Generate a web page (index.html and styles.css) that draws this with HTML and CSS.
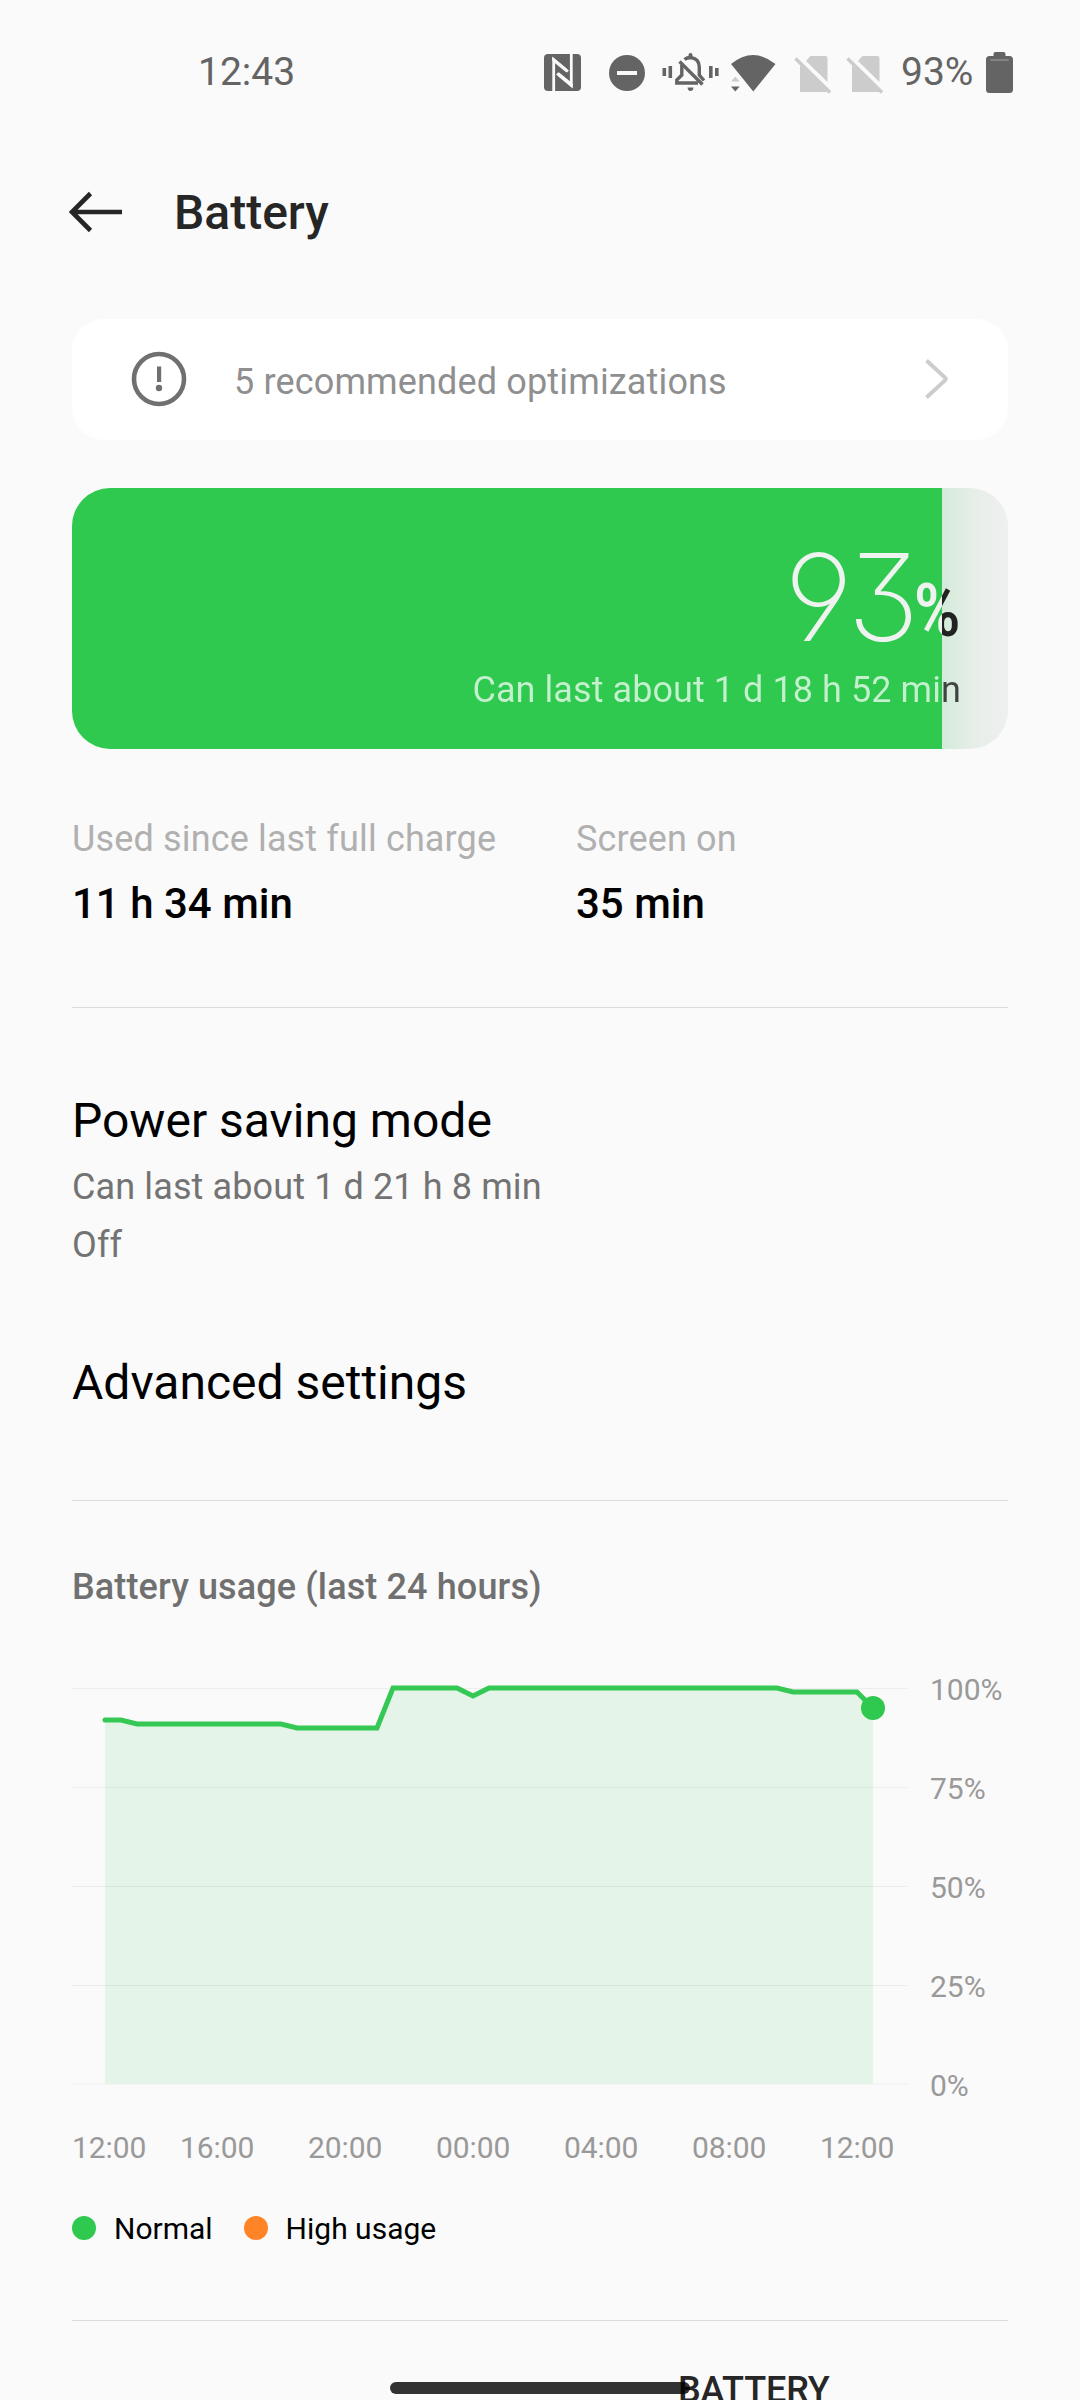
FILE: index.html
```html
<!DOCTYPE html>
<html lang="en">
  <head>
    <meta charset="UTF-8" />
    <meta name="viewport" content="width=device-width, initial-scale=1.0" />
    <title>Battery</title>
    <link rel="stylesheet" href="styles.css">
  </head>
  <body>
    <!-- Status bar -->
    <div class="status-bar">
      <span class="clock">12:43</span>
      <div class="status-icons">
        <svg class="icon-nfc" width="37" height="37" viewBox="0 0 37 37">
          <rect width="37" height="37" rx="4" fill="#646464" />
          <path d="M9.7 37V5.5L24 17.5M27.3 0V31.5L13 19.5" fill="none" stroke="#fafafa" stroke-width="2.8" />
          <path d="M8.3 3.2L22.5 14.5V18.5L8.3 7ZM28.7 33.8L14.5 22.5V18L28.7 29.5Z" fill="#fafafa" />
        </svg>
        <svg class="icon-dnd" width="36" height="36" viewBox="0 0 36 36">
          <circle cx="18" cy="18" r="18" fill="#646464" />
          <rect x="8" y="16" width="20" height="4" fill="#fafafa" />
        </svg>
        <svg class="icon-bell" width="57" height="38" viewBox="0 0 57 38">
          <g fill="#646464">
            <rect x="0.5" y="15" width="3.6" height="8" />
            <rect x="6.5" y="13" width="3.6" height="12" />
            <rect x="47" y="13" width="3.6" height="12" />
            <rect x="53" y="15" width="3.6" height="8" />
            <path d="M25.5 34.5H31.5Q31 38 28.5 38Q26 38 25.5 34.5Z" />
            <path d="M26.5 5V2Q26.5 0 28.5 0Q30.5 0 30.5 2V5Z" />
          </g>
          <path d="M22.5 6.5Q25 4.5 28.5 4.5Q37.2 5.5 37.3 14V22L42 27.5" fill="none" stroke="#646464" stroke-width="3.4" />
          <path d="M19.8 12V22L14.8 27V30H36" fill="none" stroke="#646464" stroke-width="3.4" />
          <path d="M17.5 8.5L40.5 31.5" stroke="#646464" stroke-width="3.4" />
        </svg>
        <svg class="icon-wifi" width="46" height="38" viewBox="0 0 46 38">
          <path d="M1 10Q23 -8 45.5 10L23.3 37.5Z" fill="#646464" />
          <path d="M1 27.5L5.3 22.5L9.6 27.5Z" fill="#ccc" />
          <path d="M1 32.5L5.3 37.5L9.6 32.5Z" fill="#646464" />
        </svg>
        <svg class="icon-sim" width="38" height="38" viewBox="0 0 38 38">
          <path d="M16.5 0H31.5Q33.5 0 33.5 2V26L12 5ZM6 9L33.5 36H6Z" fill="#ccc" />
          <path d="M1.5 2.5L36 36.5" stroke="#ccc" stroke-width="3.5" />
        </svg>
        <svg class="icon-sim" width="38" height="38" viewBox="0 0 38 38">
          <path d="M16.5 0H31.5Q33.5 0 33.5 2V26L12 5ZM6 9L33.5 36H6Z" fill="#ccc" />
          <path d="M1.5 2.5L36 36.5" stroke="#ccc" stroke-width="3.5" />
        </svg>
        <span class="level">93%</span>
        <svg class="icon-battery" width="27" height="41" viewBox="0 0 27 41">
          <path d="M7.5 4V2Q7.5 0 9.5 0H17.5Q19.5 0 19.5 2V4H23.5Q27 4 27 7.5V37.5Q27 41 23.5 41H3.5Q0 41 0 37.5V7.5Q0 4 3.5 4Z" fill="#646464" />
          <rect x="4" y="7" width="19" height="2" rx="1" fill="#858585" />
        </svg>
      </div>
    </div>

    <header class="header">
      <svg width="54" height="42" viewBox="0 0 54 42">
        <path d="M2 21H53M21.5 2.5L3 21L21.5 39.5" fill="none" stroke="#262626" stroke-width="4.6" />
      </svg>
      <h1>Battery</h1>
    </header>

    <main>
      <!-- Recommendations -->
      <div class="tip">
        <svg class="tip-icon" width="56" height="56" viewBox="0 0 56 56">
          <circle cx="28" cy="28" r="25" fill="none" stroke="#707070" stroke-width="4.6" />
          <rect x="26" y="15.5" width="4.2" height="15.5" fill="#707070" />
          <circle cx="28" cy="37" r="3.2" fill="#707070" />
        </svg>
        <span>5 recommended optimizations</span>
        <svg class="chevron" width="26" height="42" viewBox="0 0 26 42">
          <path d="M2.5 2.5L21 19.6Q22.5 21 21 22.4L2.5 39.5" fill="none" stroke="#ccc" stroke-width="4" />
        </svg>
      </div>

      <!-- Charge level -->
      <div class="charge">
        <div class="charge-value"><span class="digits">93</span><span class="percent">%</span></div>
        <div class="charge-note">Can last about 1 d 18 h 52 min</div>
      </div>

      <div class="stats">
        <div class="stat">
          <div class="stat-label">Used since last full charge</div>
          <div class="stat-value">11 h 34 min</div>
        </div>
        <div class="stat">
          <div class="stat-label">Screen on</div>
          <div class="stat-value">35 min</div>
        </div>
      </div>

      <!-- Settings -->
      <div class="settings">
        <div class="setting">
          <h2>Power saving mode</h2>
          <p>Can last about 1 d 21 h 8 min</p>
          <p>Off</p>
        </div>
        <div class="setting">
          <h2>Advanced settings</h2>
        </div>
      </div>

      <!-- Battery usage chart -->
      <section class="usage">
        <h3>Battery usage (last 24 hours)</h3>
        <div class="chart">
          <svg width="836" height="495" viewBox="0 0 836 495">
            <path d="M33 80H49L65 84H209L225 88H305L321 48H385L401 56L417 48H705L721 52H785L801 68V443.5H33Z" fill="#e4f4e8" />
            <path d="M0 48.5H835M0 147.5H835M0 246.5H835M0 345.5H835M0 444H835" stroke="#000" stroke-opacity="0.05" />
            <polyline points="33,80 49,80 65,84 209,84 225,88 305,88 321,48 385,48 401,56 417,48 705,48 721,52 785,52 801,68" fill="none" stroke="#35c854" stroke-width="5" stroke-linecap="round" />
            <circle cx="801" cy="68" r="12" fill="#2fc94f" />
          </svg>
          <div class="y-axis">
            <span>100%</span>
            <span>75%</span>
            <span>50%</span>
            <span>25%</span>
            <span>0%</span>
          </div>
        </div>
        <div class="x-axis">
          <span>12:00</span>
          <span>16:00</span>
          <span>20:00</span>
          <span>00:00</span>
          <span>04:00</span>
          <span>08:00</span>
          <span>12:00</span>
        </div>
        <div class="legend">
          <span class="dot normal"></span><span>Normal</span>
          <span class="dot high"></span><span>High usage</span>
        </div>
      </section>

      <div class="next-section">BATTERY</div>
    </main>

    <div class="home-bar"></div>
  </body>
</html>
```
FILE: styles.css
```css
* {
  box-sizing: border-box;
}

body {
  margin: 0;
  height: 2400px;
  position: relative;
  overflow: hidden;
  background-color: #fafafa;
  font-family: Roboto, sans-serif;
  color: #000;
}

h1,
h2,
h3,
p {
  margin: 0;
}

svg {
  display: block;
  flex: none;
}

.status-bar {
  display: flex;
  justify-content: space-between;
  height: 144px;
  padding: 0 67px 0 198px;
  color: #646464;
  font-size: 39px;
  line-height: 144px;
}

.status-icons {
  display: flex;
  align-items: center;
}

.icon-nfc {
  margin-right: 28px;
}

.icon-dnd {
  margin-top: 2px;
  margin-right: 17px;
}

.icon-bell {
  margin-right: 11px;
}

.icon-wifi {
  margin-top: 1px;
  margin-right: 18px;
}

.icon-sim {
  margin-top: 6px;
  margin-right: 14px;
}

.level {
  width: 72px;
  margin-left: 3px;
  margin-right: 13px;
}

.icon-battery {
  margin-top: 1px;
}

.header {
  display: flex;
  align-items: center;
  height: 136px;
  padding-left: 69px;
  gap: 51px;
}

.header h1 {
  padding-top: 2px;
  color: #262626;
  font-size: 48px;
  font-weight: 500;
  line-height: 56px;
}

main {
  padding: 39px 72px 0;
}

.tip {
  display: flex;
  align-items: center;
  height: 121px;
  padding: 0 58px 0 59px;
  border-radius: 32px;
  background-color: #fff;
}

.tip-icon,
.chevron {
  margin-bottom: 1px;
}

.tip span {
  margin-left: 47px;
  padding-top: 4px;
  color: #8f8f8f;
  font-size: 36px;
  letter-spacing: 0.15px;
}

.chevron {
  margin-left: auto;
}

.charge {
  height: 261px;
  margin-top: 48px;
  padding-top: 40px;
  border-radius: 38px;
  background: linear-gradient(to right, #2fc94f 870px, #d3ebd9 870px, #e6eee8 900px, #efefef 936px);
}

/* The text switches colour where the green fill ends */
.charge-value,
.charge-note {
  padding-right: 47px;
  text-align: right;
  color: transparent;
  background: linear-gradient(to right, #c5f0ce 870px, #3e4440 870px);
  -webkit-background-clip: text;
  background-clip: text;
}

.charge-value {
  height: 138px;
  line-height: 138px;
  background-image: linear-gradient(to right, #eff3f0 870px, #222 870px);
}

.digits {
  font-family: Inter, sans-serif;
  font-size: 121px;
  font-weight: 250;
  font-feature-settings: "ss01", "cv04", "cv09";
  letter-spacing: -6px;
}

.percent {
  font-size: 75px;
  font-weight: 500;
  font-stretch: 75%;
  line-height: 1;
  vertical-align: 5px;
}

.charge-note {
  font-size: 36px;
  letter-spacing: 0.07px;
  line-height: 48px;
}

.stats {
  display: flex;
  height: 259px;
  padding-top: 69px;
  border-bottom: 1px solid #dcdcdc;
}

.stat {
  flex: none;
  width: 504px;
}

.stat + .stat {
  width: 432px;
}

.stat-label {
  color: #b0b0b0;
  font-size: 36px;
  letter-spacing: 0.15px;
  line-height: 42px;
}

.stat-value {
  margin-top: 19px;
  font-size: 42px;
  font-weight: 500;
  line-height: 50px;
}

.settings {
  height: 493px;
  padding-top: 85px;
  border-bottom: 1px solid #dcdcdc;
}

.setting h2 {
  font-size: 48px;
  font-weight: 400;
  line-height: 56px;
  margin-bottom: 9px;
}

.setting p {
  color: #737373;
  font-size: 36px;
  letter-spacing: 0.12px;
  line-height: 58px;
}

.setting + .setting {
  margin-top: 81px;
}

.usage {
  height: 820px;
  padding-top: 65px;
  border-bottom: 1px solid #dcdcdc;
}

.usage h3 {
  color: #707070;
  font-size: 36px;
  font-weight: 500;
  letter-spacing: 0.12px;
  line-height: 42px;
}

.chart {
  display: flex;
  margin-top: 32px;
  gap: 22px;
}

.y-axis {
  display: flex;
  flex-direction: column;
  color: #999;
  font-size: 30px;
  line-height: 99px;
}

.x-axis {
  display: flex;
  color: #999;
  font-size: 30px;
  letter-spacing: -0.1px;
  line-height: 26px;
}

.x-axis span {
  width: 128px;
}

.x-axis span:first-child {
  width: 108px;
}

.legend {
  display: flex;
  align-items: center;
  height: 36px;
  margin-top: 49px;
  font-size: 30px;
}

.dot {
  width: 24px;
  height: 24px;
  margin-right: 18px;
  border-radius: 50%;
}

.normal {
  background-color: #2fc94f;
}

.high {
  margin-left: 31px;
  background-color: #ff8427;
}

.next-section {
  margin-top: 48px;
  padding-left: 606px;
  color: #262626;
  font-size: 36px;
  font-weight: 500;
  letter-spacing: -0.15px;
  line-height: 42px;
}

/* Gesture navigation handle, drawn over the page */
.home-bar {
  position: absolute;
  left: 390px;
  top: 2382px;
  width: 300px;
  height: 12px;
  border-radius: 6px;
  background-color: rgba(0, 0, 0, 0.8);
}
```
